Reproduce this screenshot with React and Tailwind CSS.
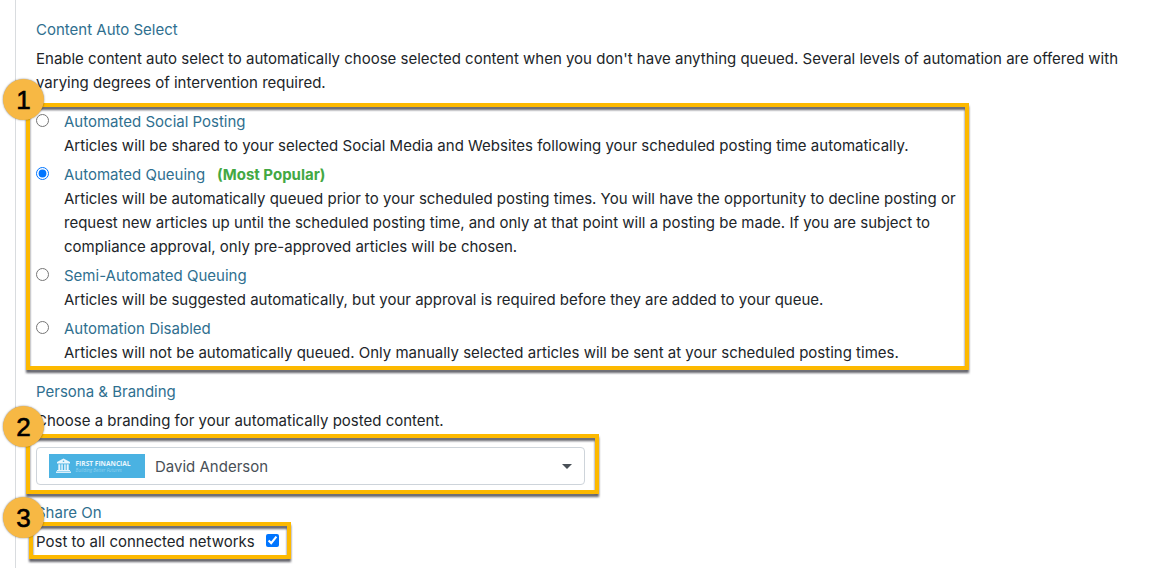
import React from "react";

const OPTIONS = [
  {
    id: "social-posting",
    title: "Automated Social Posting",
    text: "Articles will be shared to your selected Social Media and Websites following your scheduled posting time automatically.",
  },
  {
    id: "queuing",
    title: "Automated Queuing",
    note: "(Most Popular)",
    text: "Articles will be automatically queued prior to your scheduled posting times. You will have the opportunity to decline posting or request new articles up until the scheduled posting time, and only at that point will a posting be made. If you are subject to compliance approval, only pre-approved articles will be chosen.",
  },
  {
    id: "semi-automated",
    title: "Semi-Automated Queuing",
    text: "Articles will be suggested automatically, but your approval is required before they are added to your queue.",
  },
  {
    id: "disabled",
    title: "Automation Disabled",
    text: "Articles will not be automatically queued. Only manually selected articles will be sent at your scheduled posting times.",
  },
];

/* Numbered highlight drawn over the group that contains it. */
function Callout({ number, frame, badge }) {
  return (
    <div className={`pointer-events-none absolute ${frame}`}>
      <div className="h-full w-full border-4 border-[#fdb900] drop-shadow-[0_3px_1px_rgba(60,60,70,0.8)]" />
      <span
        className={`absolute flex size-[41px] items-center justify-center rounded-full bg-[#f7b844] font-['Liberation_Sans',sans-serif] text-[26px] leading-none text-black shadow-[0_0_2px_rgba(0,0,0,0.5)] [-webkit-text-stroke:0.6px_black] ${badge}`}
      >
        {number}
      </span>
    </div>
  );
}

function BrandLogo() {
  return (
    <svg viewBox="0 0 96 24" className="h-6 w-24" aria-hidden="true">
      <rect width="96" height="24" fill="#4ab2e2" />
      <g fill="#e9f6fd">
        <path d="M14.5 4.5 L21 8 V9.4 H8 V8 Z" />
        <rect x="9.3" y="10.3" width="2" height="5.7" />
        <rect x="12.3" y="10.3" width="1.5" height="5.7" />
        <rect x="15.2" y="10.3" width="1.5" height="5.7" />
        <rect x="17.7" y="10.3" width="2" height="5.7" />
        <rect x="8" y="16" width="13" height="1" />
        <rect x="7" y="17.5" width="15" height="1.4" />
      </g>
      <circle cx="14.5" cy="7.2" r="0.8" fill="#4ab2e2" />
      <text x="26.5" y="12.3" fill="#e9f6fd" fontFamily="Open Sans, sans-serif" fontWeight="700" fontSize="6.6">
        FIRST FINANCIAL
      </text>
      <text x="26.5" y="17.6" fill="#8fd0ef" fontFamily="Open Sans, sans-serif" fontStyle="italic" fontSize="4.6">
        Building Better Futures
      </text>
    </svg>
  );
}

export default function App() {
  return (
    <div className="flex min-h-screen bg-white pl-[15px] font-['Inter',sans-serif] text-[15px] leading-6 text-[#212529]">
      <main className="flex-1 border-l border-[#d9dcdf] pt-[18px] pr-5 pl-5">
        <section>
          <h2 className="mb-[5px] text-[#2f6f8f]">Content Auto Select</h2>
          <p>
            Enable content auto select to automatically choose selected content when you don't have anything queued.
            Several levels of automation are offered with varying degrees of intervention required.
          </p>
          <fieldset aria-label="Automation level" className="relative mt-[15px] flex max-w-[923px] flex-col gap-[5px]">
            {OPTIONS.map((o) => (
              <div key={o.id} className="flex items-start gap-[15px]">
                <input
                  type="radio"
                  id={o.id}
                  name="automation"
                  defaultChecked={o.id === "queuing"}
                  aria-describedby={`${o.id}-text`}
                  className="mt-1 size-[13px] shrink-0"
                />
                <div>
                  <label htmlFor={o.id} className="block text-[#2f6f8f]">
                    {o.title}
                    {o.note && <strong className="ml-3 font-bold text-[#43a843]">{o.note}</strong>}
                  </label>
                  <p id={`${o.id}-text`}>{o.text}</p>
                </div>
              </div>
            ))}
            <Callout number={1} frame="-inset-x-2.5 -top-[7px] -bottom-[5px]" badge="-top-6 -left-[23px]" />
          </fieldset>
        </section>

        <section className="mt-[15px]">
          <h2 className="mb-[5px] text-[#2f6f8f]">Persona &amp; Branding</h2>
          <label htmlFor="branding">Choose a branding for your automatically posted content.</label>
          <div className="relative mt-3.5 max-w-[549px]">
            <select
              id="branding"
              className="block h-[38px] w-full appearance-none rounded border border-[#ced4da] bg-white pt-0.5 pr-9 pl-[118px] text-[#495057]"
            >
              <option>David Anderson</option>
            </select>
            <div className="pointer-events-none absolute inset-0 flex items-center justify-between px-[13px]">
              <BrandLogo />
              <svg viewBox="0 0 10 5" className="h-[5px] w-2.5" aria-hidden="true">
                <path d="M0 0H10L5 5Z" fill="#495057" />
              </svg>
            </div>
            <Callout number={2} frame="-top-[13px] -right-3.5 -bottom-[9px] -left-2.5" badge="-top-7 -left-[23px]" />
          </div>
        </section>

        <section className="mt-4 pb-3.5">
          <h2 className="mb-[5px] text-[#2f6f8f]">Share On</h2>
          <div className="relative flex w-fit items-center gap-[11px]">
            <label htmlFor="all-networks">Post to all connected networks</label>
            <input id="all-networks" type="checkbox" defaultChecked className="mb-1 size-[13px]" />
            <Callout number={3} frame="-top-2 -right-3 -bottom-[5px] -left-[7px]" badge="-top-[25px] -left-[26px]" />
          </div>
        </section>
      </main>
    </div>
  );
}
